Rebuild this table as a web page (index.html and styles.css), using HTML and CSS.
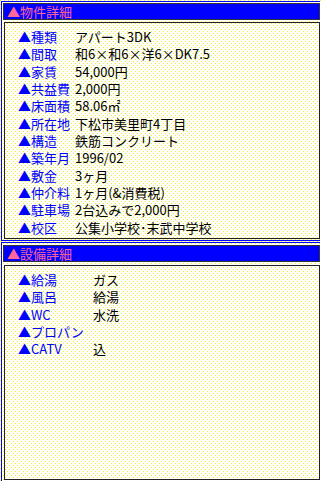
FILE: index.html
```html
<!DOCTYPE html>
<html>
<head>
	<meta charset="utf-8">
	<title>物件詳細</title>
	<link rel="stylesheet" href="styles.css">
</head>
<body>
	<!-- 物件詳細 -->
	<div class="section">
		<div class="sec-head">▲物件詳細</div>
		<div class="sec-box box-main">
			<table class="spec spec-main">
				<tr><th>▲種類</th><td>アパート3DK</td></tr>
				<tr><th>▲間取</th><td>和6×和6×洋6×DK7.5</td></tr>
				<tr><th>▲家賃</th><td>54,000円</td></tr>
				<tr><th>▲共益費</th><td>2,000円</td></tr>
				<tr><th>▲床面積</th><td>58.06㎡</td></tr>
				<tr><th>▲所在地</th><td>下松市美里町4丁目</td></tr>
				<tr><th>▲構造</th><td>鉄筋コンクリート</td></tr>
				<tr><th>▲築年月</th><td>1996/02</td></tr>
				<tr><th>▲敷金</th><td>3ヶ月</td></tr>
				<tr><th>▲仲介料</th><td>1ヶ月(&amp;消費税)</td></tr>
				<tr><th>▲駐車場</th><td>2台込みで2,000円</td></tr>
				<tr><th>▲校区</th><td>公集小学校･末武中学校</td></tr>
			</table>
		</div>
	</div>

	<!-- 設備詳細 -->
	<div class="section">
		<div class="sec-head">▲設備詳細</div>
		<div class="sec-box box-equip">
			<table class="spec spec-equip">
				<tr><th>▲給湯</th><td>ガス</td></tr>
				<tr><th>▲風呂</th><td>給湯</td></tr>
				<tr><th>▲WC</th><td>水洗</td></tr>
				<tr><th>▲プロパン</th><td></td></tr>
				<tr><th>▲CATV</th><td>込</td></tr>
			</table>
		</div>
	</div>
</body>
</html>
```

FILE: styles.css
```css
/* page: white with a yellow dot screen */
html, body {
	background-color: #fff;
	background-image:
		conic-gradient(at 1px 1px, transparent 75%, #f0f028 0),
		conic-gradient(at 1px 1px, transparent 75%, #f0f028 0);
	background-size: 4px 4px;
	background-position: 0 0, 2px 2px;
}
body {
	margin: 1px 0 0 1px;
	font-family: "Noto Sans CJK JP", "DejaVu Sans", sans-serif;
	font-size: 13px;
	color: #000;
	overflow: hidden;
}

/* section frame: blue rule on top, left and bottom */
.section {
	border: 1px solid #0000ff;
	border-right: none;
	padding: 1px 0 1px 1px;
	width: 317px;
	margin-bottom: 1px;
}
.section + .section {
	padding-top: 2px;
}

/* blue title bar */
.sec-head {
	background-color: #0000ff;
	border: 1px solid #333;
	height: 15px;
	line-height: 15px;
	padding-left: 3px;
	color: #ff6699;
	white-space: nowrap;
}

/* dotted content box */
.sec-box {
	border: 1px solid #222;
	margin: 2px 0 0 1px;
	padding: 5px 0 0 13px;
	box-sizing: border-box;
}
.box-main {
	height: 217px;
}
.box-equip {
	margin-top: 3px;
	height: 215px;
}

/* label / value rows */
.spec {
	border-collapse: collapse;
}
.spec th, .spec td {
	padding: 0;
	height: 17.33px;
	line-height: 17px;
	text-align: left;
	font-weight: normal;
	white-space: nowrap;
}
.spec th {
	color: #0000ff;
}
.spec-main th {
	width: 57px;
}
.spec-equip th {
	width: 75px;
}
```
